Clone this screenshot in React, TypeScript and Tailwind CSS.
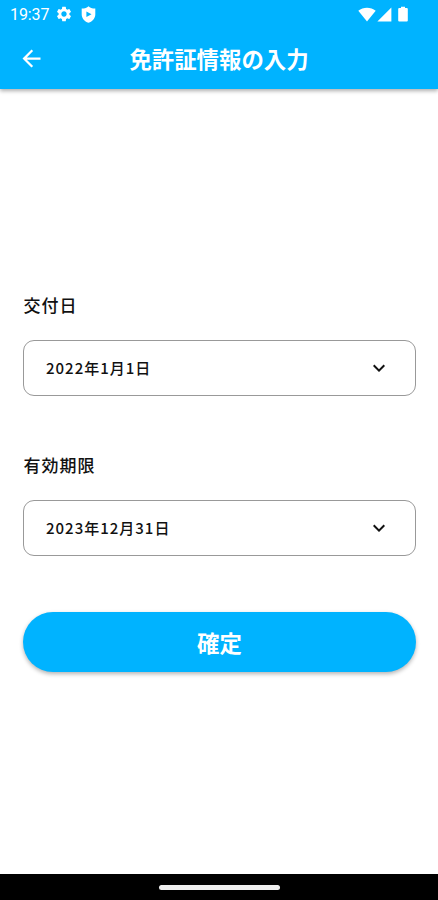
import { useState } from 'react'
import { MdArrowBack, MdExpandMore, MdSettings } from 'react-icons/md'

type DateField = {
  id: string
  label: string
  value: string
}

const fields: DateField[] = [
  { id: 'issued', label: '交付日', value: '2022年1月1日' },
  { id: 'expires', label: '有効期限', value: '2023年12月31日' }
]

function StatusBar() {
  return (
    <div className="flex h-7 items-center pr-[30px] pl-[10px] text-white">
      <span className="w-[39px] pt-px font-['Roboto',sans-serif] text-[16px] leading-7 tracking-[-0.1px] whitespace-nowrap">19:37</span>
      <MdSettings size={18} className="ml-[6px]" />
      {/* Play Protect shield */}
      <svg width="15" height="17" viewBox="0 0 15 17" className="ml-[8px]">
        <path
          fill="currentColor"
          fillRule="evenodd"
          d="M7.500.2C9 1.800 11 2.500 14.300 2.600v5.800c0 3.600-2.600 6.800-6.800 8.400C3.300 15.200.7 12 .7 8.400V2.600C4 2.500 6 1.800 7.500.2ZM5.400 5.400v5.600L10.500 8.200 5.400 5.400Z"
        />
      </svg>
      <div className="ml-auto flex items-center">
        <svg width="18" height="15" viewBox="0 0 18 15">
          <path fill="currentColor" d="M9 14.500.3 3.800C5.200-.4 12.800-.4 17.700 3.800L9 14.500Z" />
        </svg>
        <svg width="15" height="15" viewBox="0 0 15 15" className="ml-px">
          <path fill="currentColor" d="M14.400.5v14H.4l14-14Z" />
        </svg>
        <svg width="10" height="16" viewBox="0 0 10 16" className="ml-[6px]">
          <path fill="currentColor" d="M3 .7h4v1.400h1.800q1 0 1 1v11.400q0 1-1 1H1.200q-1 0-1-1V3.100q0-1 1-1H3Z" />
        </svg>
      </div>
    </div>
  )
}

function DateSelect({ field, onOpen }: { field: DateField; onOpen: (id: string) => void }) {
  return (
    <div>
      <p className="pl-[0.5px] text-[17px] leading-6 font-medium tracking-[1px]">{field.label}</p>
      <button
        type="button"
        onClick={() => onOpen(field.id)}
        className="mt-[23px] flex h-14 w-full items-center justify-between rounded-[11px] border border-[#999] pr-[24px] pl-[22px]"
      >
        <span className="text-[15px] leading-6 font-medium tracking-[1px]">{field.value}</span>
        <MdExpandMore size={24} />
      </button>
    </div>
  )
}

export default function App() {
  const [, setActive] = useState<string | null>(null)

  return (
    <div className="flex h-[900px] w-[438px] flex-col overflow-hidden bg-white font-['Noto_Sans_CJK_JP',sans-serif] text-[#111]">
      <header className="h-[89px] shrink-0 bg-[#00b3ff] text-white shadow-[0_2px_4px_rgba(0,0,0,0.32)]">
        <StatusBar />
        <div className="grid h-[61px] grid-cols-[62px_1fr_62px] items-center">
          <button type="button" className="ml-[18px] w-[27px]" aria-label="戻る">
            <MdArrowBack size={27} />
          </button>
          <h1 className="pb-[2px] text-center text-[22.400px] leading-8 font-bold whitespace-nowrap">免許証情報の入力</h1>
        </div>
      </header>

      <main className="flex flex-1 flex-col px-[23px] pt-[204px] pr-[22px]">
        <div className="flex flex-col gap-[57px]">
          {fields.map((field) => (
            <DateSelect key={field.id} field={field} onOpen={setActive} />
          ))}
        </div>
        <button
          type="button"
          className="mt-[56px] h-[60px] rounded-full bg-[#00b3ff] text-[22.400px] leading-8 font-bold text-white shadow-[0_2px_4px_rgba(0,0,0,0.3)]"
        >
          確定
        </button>
      </main>

      {/* Gesture navigation bar */}
      <div className="flex h-[26px] shrink-0 items-center justify-center bg-black">
        <div className="h-[5px] w-[121px] rounded-full bg-[#eee]" />
      </div>
    </div>
  )
}
